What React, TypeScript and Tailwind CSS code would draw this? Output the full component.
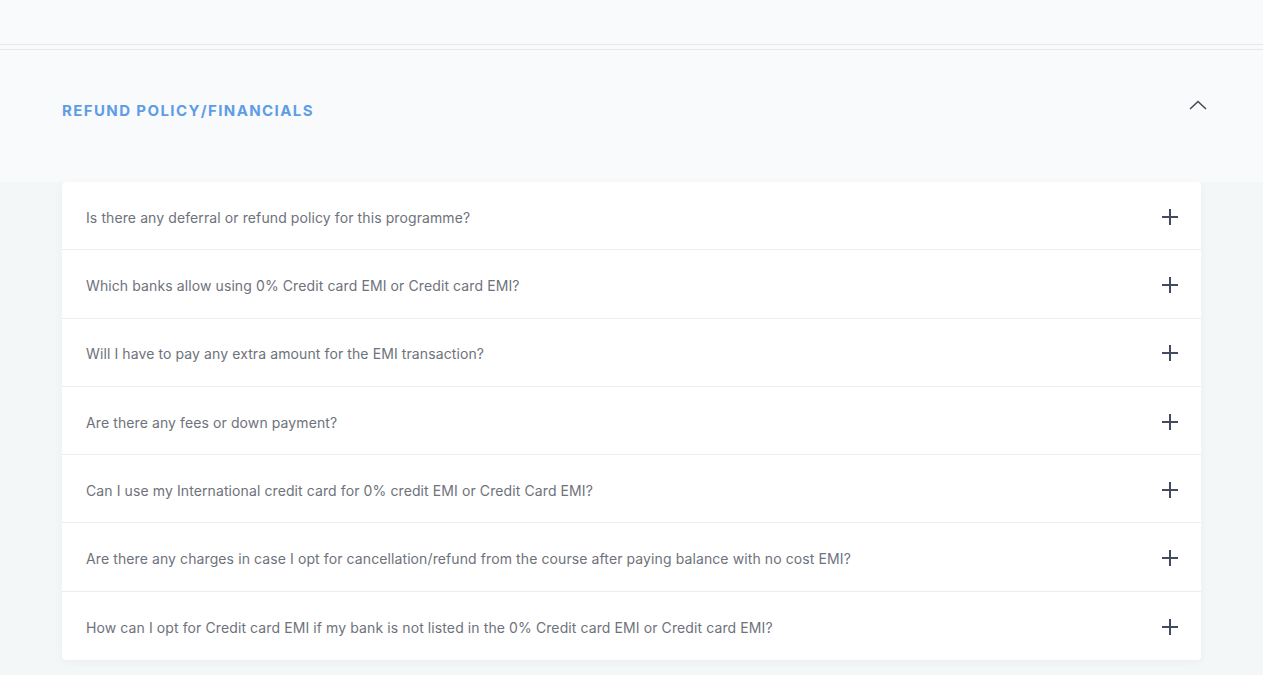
import React from "react";

const questions = [
  "Is there any deferral or refund policy for this programme?",
  "Which banks allow using 0% Credit card EMI or Credit card EMI?",
  "Will I have to pay any extra amount for the EMI transaction?",
  "Are there any fees or down payment?",
  "Can I use my International credit card for 0% credit EMI or Credit Card EMI?",
  "Are there any charges in case I opt for cancellation/refund from the course after paying balance with no cost EMI?",
  "How can I opt for Credit card EMI if my bank is not listed in the 0% Credit card EMI or Credit card EMI?",
];

function Plus() {
  return (
    <svg width="16" height="16" viewBox="0 0 16 16" className="shrink-0 mt-[2px]">
      <path d="M8 0V16M0 8H16" stroke="#434c5e" strokeWidth="2" />
    </svg>
  );
}

function Chevron() {
  return (
    <svg width="18" height="10" viewBox="0 0 18 10">
      <path d="M1 9L9 1.5L17 9" stroke="#4b4a55" strokeWidth="1.6" fill="none" />
    </svg>
  );
}

export default function App() {
  return (
    <div
      className="w-[1263px] h-[675px] overflow-hidden bg-[#f4f7f8]"
      style={{ fontFamily: "Inter, 'Noto Sans', sans-serif" }}
    >
      <div className="h-[45px] bg-[#f9fafc] border-b border-[#e3e8ee]" />
      <div className="h-[5px] bg-[#f9fafc] border-b border-[#e3e8ee]" />
      <div className="h-[132px] bg-[#f9fafc] flex items-start justify-between pl-[62px] pr-[56px]">
        <div className="mt-[52px] text-[15px] font-bold tracking-[1.4px] text-[#5e9de6] leading-[18px]">
          REFUND POLICY/FINANCIALS
        </div>
        <div className="mt-[50px]">
          <Chevron />
        </div>
      </div>
      <div className="px-[62px]">
        <div className="w-[1139px] bg-white rounded-[4px] shadow-[0_2px_10px_rgba(0,0,0,0.04)]">
          {questions.map((q, i) => (
            <div
              key={i}
              className={`h-[68.3px] flex items-center justify-between pl-[24px] pr-[23px] ${
                i < questions.length - 1 ? "border-b border-[#ebedf0]" : ""
              }`}
            >
              <span className="pt-[3px] text-[14px] tracking-[0.1px] text-[#6e727b]">{q}</span>
              <Plus />
            </div>
          ))}
        </div>
      </div>
    </div>
  );
}
